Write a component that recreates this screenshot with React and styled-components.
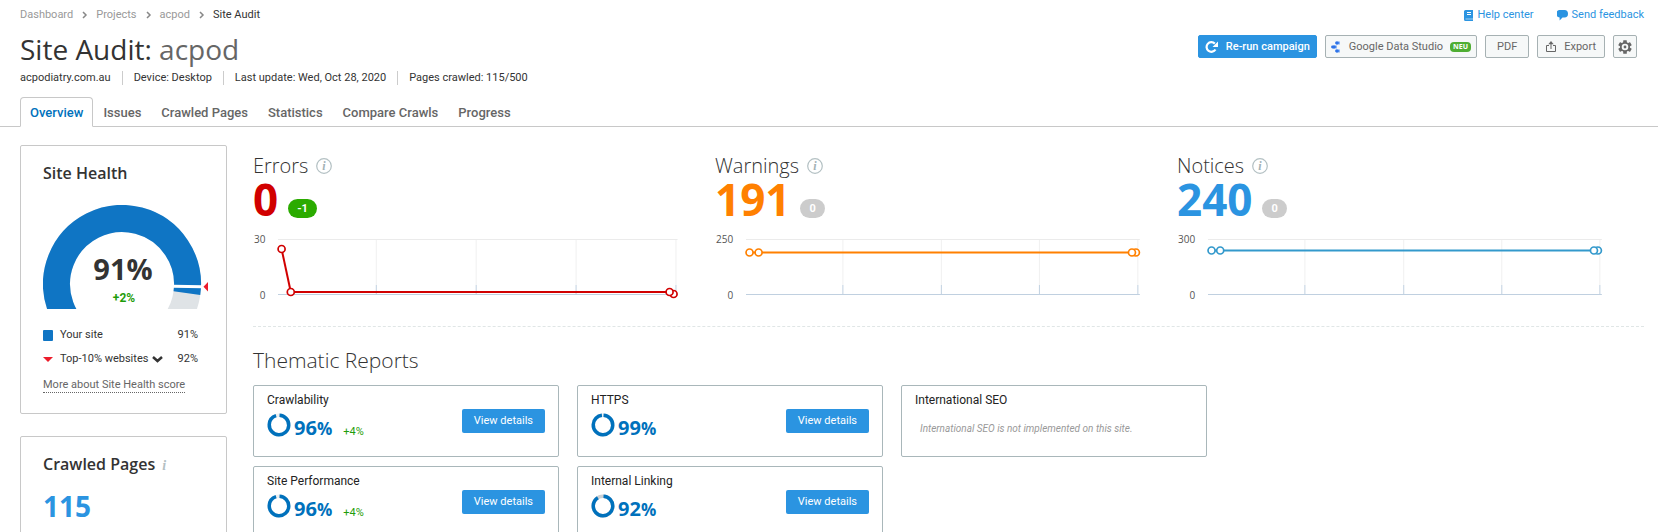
import React from 'react';
import styled, { createGlobalStyle } from 'styled-components';

const uiFont = 'Roboto, "Open Sans", sans-serif';
const displayFont = '"Open Sans", "Noto Sans", sans-serif';

const GlobalStyle = createGlobalStyle`
  *, *::before, *::after { box-sizing: border-box; }
  body {
    margin: 0;
    background: #fff;
    color: #333;
    font-family: ${uiFont};
    font-size: 11px;
    line-height: 14px;
  }
  h1, h2, h3, p, dl, dd, dt, ol, ul { margin: 0; padding: 0; }
  ol, ul { list-style: none; }
  button { font-family: inherit; cursor: pointer; }
  svg { display: block; flex: none; }
`;

/* ---------- header ---------- */

const Header = styled.header`
  display: flex;
  justify-content: space-between;
  padding: 7px 14px 0 20px;
`;

const Breadcrumbs = styled.ol`
  display: flex;
  align-items: center;
  gap: 8px;
  line-height: 16px;
`;

const Crumb = styled.li`
  display: flex;
  align-items: center;
  gap: 9px;
  color: ${(p) => (p.$current ? '#333' : '#999')};
  a { color: inherit; text-decoration: none; }
`;

const Title = styled.h1`
  margin-top: 8px;
  font: 400 28px/36px ${displayFont};
  color: #333;
  span { color: #666; }
`;

const Meta = styled.ul`
  display: flex;
  margin-top: 4px;
  li + li {
    margin-left: 11px;
    padding-left: 11px;
    border-left: 1px solid #ccc;
  }
`;

const HeaderSide = styled.div`
  display: flex;
  flex-direction: column;
  align-items: flex-end;
`;

const HelpLinks = styled.nav`
  display: flex;
  gap: 23px;
`;

const HelpLink = styled.a`
  display: flex;
  align-items: center;
  gap: 4px;
  line-height: 16px;
  color: #2b94e1;
  text-decoration: none;
`;

const Toolbar = styled.div`
  display: flex;
  gap: 8px;
  margin: 12px 7px 0 0;
`;

const ToolButton = styled.button`
  display: flex;
  align-items: center;
  gap: ${(p) => p.$gap || 7}px;
  height: 23px;
  padding: 0 ${(p) => p.$pad || 5}px;
  border: 1px solid ${(p) => (p.$primary ? '#2b94e1' : '#a6b1b3')};
  border-radius: 2px;
  background: ${(p) => (p.$primary ? '#2b94e1' : '#f6f8f8')};
  color: ${(p) => (p.$primary ? '#fff' : '#666')};
  font-size: 11px;
  font-weight: ${(p) => (p.$primary ? 500 : 400)};
  line-height: 14px;
`;

const NewTag = styled.span`
  padding: 0 3px;
  border-radius: 4px;
  background: #4fae33;
  color: #fff;
  font: 700 7px/10px ${displayFont};
`;

const Tabs = styled.nav`
  display: flex;
  margin-top: 12px;
  padding-left: 20px;
  border-bottom: 1px solid #c8c8c8;
`;

const Tab = styled.a`
  margin-bottom: -1px;
  padding: 7px 9px 6px;
  border: 1px solid ${(p) => (p.$active ? '#c8c8c8' : 'transparent')};
  border-bottom-color: ${(p) => (p.$active ? '#fff' : 'transparent')};
  border-radius: 4px 4px 0 0;
  color: ${(p) => (p.$active ? '#0071bc' : '#666')};
  font-size: 13px;
  font-weight: 500;
  line-height: 15px;
  text-decoration: none;
`;

/* ---------- sidebar ---------- */

const Content = styled.main`
  display: grid;
  grid-template-columns: 207px minmax(0, 1fr);
  gap: 26px;
  padding: 18px 14px 0 20px;
`;

const Sidebar = styled.aside`
  display: flex;
  flex-direction: column;
  gap: 22px;
`;

const Panel = styled.section`
  padding: 16px 22px 20px;
  border: 1px solid #c8c8c8;
  border-radius: 2px;
`;

const PanelTitle = styled.h2`
  display: flex;
  align-items: baseline;
  gap: 7px;
  font: 600 16px/22px ${displayFont};
  color: #333;
`;

const InfoGlyph = styled.span`
  font: italic 700 14px/16px "Liberation Serif", serif;
  color: #b4c0c3;
`;

const GaugeSvg = styled.svg`
  margin: 21px 0 19px;
  overflow: visible;
`;

const Legend = styled.dl`
  display: grid;
  grid-template-columns: 1fr auto;
  row-gap: 10px;
  padding-right: 6px;
  dt { display: flex; align-items: center; }
`;

const LegendMark = styled.span`
  display: flex;
  width: 17px;
`;

const Swatch = styled.span`
  width: 10px;
  height: 11px;
  border-radius: 1px;
  background: #0f75c4;
`;

const Select = styled.button`
  display: flex;
  align-items: center;
  gap: 4px;
  padding: 0;
  border: 0;
  background: none;
  color: inherit;
  font-size: 11px;
  line-height: 14px;
`;

const MoreLink = styled.a`
  display: inline-block;
  margin-top: 12px;
  border-bottom: 1px dotted #666;
  color: #666;
  line-height: 14px;
  text-decoration: none;
`;

const PageCount = styled.p`
  margin-top: 14px;
  font: 700 28px/34px ${displayFont};
  color: #2b94e1;
`;

/* ---------- summary ---------- */

const Summary = styled.div`
  display: grid;
  grid-template-columns: repeat(3, minmax(0, 1fr));
  padding: 8px 5px 31px 0;
`;

const MetricTitle = styled.h2`
  display: flex;
  align-items: center;
  gap: 8px;
  font: 300 20px/26px ${displayFont};
  color: #333;
`;

const MetricRow = styled.div`
  display: flex;
  align-items: flex-end;
  gap: 10px;
`;

const MetricValue = styled.strong`
  font: 700 44px/40px ${displayFont};
  color: ${(p) => p.$color};
`;

const Delta = styled.span`
  margin-bottom: 1px;
  padding: 0 9px;
  border-radius: 10px;
  background: ${(p) => (p.$good ? '#2bab00' : '#ccc')};
  color: #fff;
  font-size: 11px;
  font-weight: 700;
  line-height: 19px;
`;

const Chart = styled.div`
  display: flex;
  gap: 13px;
  margin: 20px 37px 0 1px;
`;

const Axis = styled.div`
  display: flex;
  flex-direction: column;
  justify-content: space-between;
  margin: -7px 0;
  text-align: right;
  font: 400 10px/14px ${displayFont};
  color: #555;
`;

const Plot = styled.svg`
  flex: 1;
  min-width: 0;
  height: 56px;
  overflow: visible;
`;

/* ---------- thematic reports ---------- */

const Reports = styled.section`
  padding-top: 20px;
  border-top: 1px dashed #e0e6e6;
`;

const ReportsTitle = styled(MetricTitle)`
  font-size: 21px;
`;

const ReportGrid = styled.div`
  display: grid;
  grid-template-columns: repeat(3, minmax(0, 306px));
  gap: 9px 18px;
  margin-top: 12px;
`;

const ReportCard = styled.article`
  display: flex;
  align-items: center;
  justify-content: space-between;
  height: 72px;
  padding: 0 13px;
  border: 1px solid #a9b7ba;
  border-radius: 2px;
`;

const ReportBody = styled.div`
  align-self: flex-start;
  padding-top: 6px;
`;

const ReportTitle = styled.h3`
  font-size: 12px;
  font-weight: 400;
  line-height: 16px;
  color: #222;
`;

const Score = styled.div`
  display: flex;
  margin-top: 5px;
`;

const ScoreText = styled.p`
  display: flex;
  align-items: baseline;
  margin: 3px 0 0 3px;
  font: 700 20px/24px ${displayFont};
  color: #0071bc;
  small { font-size: 17px; }
`;

const ScoreDelta = styled.span`
  margin-left: 11px;
  color: #1f9d0b;
  font: 400 11px/14px ${uiFont};
`;

const EmptyNote = styled.p`
  margin: 14px 0 0 5px;
  color: #999;
  font-size: 10px;
  font-style: italic;
`;

const DetailsButton = styled.button`
  height: 24px;
  padding: 0 12px;
  border: 0;
  border-radius: 2px;
  background: #2b94e1;
  color: #fff;
  font-size: 11px;
  line-height: 16px;
`;

/* ---------- drawings ---------- */

const Chevron = () => (
  <svg width="6" height="8" viewBox="0 0 6 8" fill="none" stroke="#888" strokeWidth="1.5">
    <path d="M1 1l3 3-3 3" />
  </svg>
);

const BookIcon = () => (
  <svg width="9" height="11" viewBox="0 0 9 11">
    <path d="M1.500 0H9v11H1.500A1.500 1.500 0 0 1 0 9.500V1.500A1.500 1.500 0 0 1 1.500 0z" fill="#2b94e1" />
    <path d="M3 2.500h4M3 4.500h4" stroke="#fff" />
    <path d="M1.500 9h7.500" stroke="#9fd0f3" />
  </svg>
);

const SpeechIcon = () => (
  <svg width="11" height="11" viewBox="0 0 11 11" fill="#2b94e1">
    <path d="M3.500 0h4A3.500 3.800 0 0 1 7.500 7.600H5.500L2.600 10.600V7.500A3.700 3.700 0 0 1 3.500 0z" />
  </svg>
);

const ReloadIcon = () => (
  <svg width="14" height="12" viewBox="0 0 14 12" fill="none" stroke="#fff" strokeWidth="2.200">
    <path d="M10.500 8.500A4.800 4.800 0 1 1 9.800 2.600" />
    <path d="M13 .5v5.500H7.500z" fill="#fff" stroke="none" />
  </svg>
);

const StudioIcon = () => (
  <svg width="11" height="12" viewBox="0 0 11 12">
    <path d="M5 2h4M2 6h4M5 10h4" stroke="#8db7f7" strokeWidth="2.800" />
    <path d="M5.500 2h1M1.500 6h2M5.500 10h1" stroke="#2f73e8" strokeWidth="2.800" strokeLinecap="round" />
  </svg>
);

const ExportIcon = () => (
  <svg width="10" height="11" viewBox="0 0 10 11" fill="none" stroke="#666">
    <path d="M3 4.500H.5v6h9v-6H7" />
    <path d="M5 8V2" />
    <path d="M5 0L2.300 3.200h5.400z" fill="#666" stroke="none" />
  </svg>
);

const GearIcon = () => (
  <svg width="14" height="14" viewBox="-7 -7 14 14">
    <g fill="#666">
      {[0, 60, 120].map((a) => (
        <rect key={a} x="-1.800" y="-6.800" width="3.600" height="13.600" rx=".5" transform={`rotate(${a})`} />
      ))}
    </g>
    <circle r="4.200" fill="#f6f8f8" stroke="#666" strokeWidth="1.800" />
    <circle r="1.400" fill="#666" />
  </svg>
);

const InfoIcon = () => (
  <svg width="16" height="16" viewBox="0 0 16 16">
    <circle cx="8" cy="8" r="7.300" fill="none" stroke="#b3c0c3" strokeWidth="1.200" />
    <text x="8" y="12" textAnchor="middle" fill="#a3b2b6" fontFamily="Liberation Serif, serif" fontStyle="italic" fontWeight="700" fontSize="12">i</text>
  </svg>
);

const Gauge = () => (
  <GaugeSvg width="161" height="104" viewBox="0 0 161 104" role="img" aria-label="Site Health 91%">
    <clipPath id="gauge-cut"><rect width="170" height="104" /></clipPath>
    <g clipPath="url(#gauge-cut)" fill="none" strokeWidth="27">
      <circle cx="79" cy="79" r="65.500" stroke="#dfe3e6" />
      <path d="M48 136.700A65.500 65.500 0 1 1 143.900 88.100" stroke="#0f75c4" />
      <path d="M130 81.200L160 81.800" stroke="#fff" strokeWidth="3" />
    </g>
    <path d="M165 77v9.500L160.500 81.700z" fill="#ec1c2b" />
    <text x="80" y="75" textAnchor="middle" fill="#333" fontFamily={displayFont} fontWeight="700" fontSize="29">91%</text>
    <text x="81" y="97" textAnchor="middle" fill="#1f9d0b" fontFamily={uiFont} fontWeight="700" fontSize="12">+2%</text>
  </GaugeSvg>
);

const Donut = ({ value }) => {
  const length = 2 * Math.PI * 9.75;
  return (
    <svg width="24" height="24" viewBox="0 0 24 24" fill="none" strokeWidth="3.500">
      <circle cx="12" cy="12" r="9.750" stroke={value > 0.95 ? '#eef0f1' : '#ccd0d3'} />
      <circle cx="12" cy="12" r="9.750" stroke="#0071bc" strokeDasharray={`${length * value - 1.4} ${length}`} transform="rotate(-87 12 12)" />
    </svg>
  );
};

/* ---------- composed parts ---------- */

const Metric = ({ title, value, color, delta, good, max, line, ticks, points }) => (
  <section>
    <MetricTitle>{title}<InfoIcon /></MetricTitle>
    <MetricRow>
      <MetricValue $color={color}>{value}</MetricValue>
      <Delta $good={good}>{delta}</Delta>
    </MetricRow>
    <Chart>
      <Axis><span>{max}</span><span>0</span></Axis>
      <Plot role="img" aria-label={`${title} over time`}>
        <line x1="0" x2="100%" y1=".5" y2=".5" stroke="#ebebeb" />
        {ticks.map((x) => (
          <g key={x}>
            <line x1={`${x}%`} x2={`${x}%`} y1="1" y2="46" stroke="#f0f0f0" />
            <line x1={`${x}%`} x2={`${x}%`} y1="46" y2="55" stroke="#c0d0e0" />
          </g>
        ))}
        <line x1="0" x2="100%" y1="55.500" y2="55.500" stroke="#c0d0e0" />
        {points.slice(1).map(([x, y], i) => (
          <line key={x} x1={`${points[i][0]}%`} y1={points[i][1]} x2={`${x}%`} y2={y} stroke={line} strokeWidth="2" />
        ))}
        {[...points].reverse().map(([x, y]) => (
          <circle key={x} cx={`${x}%`} cy={y} r="3.500" fill="#fff" stroke={line} strokeWidth="1.700" />
        ))}
      </Plot>
    </Chart>
  </section>
);

const metrics = [
  { title: 'Errors', value: 0, color: '#d10000', line: '#d10000', delta: '-1', good: true, max: 30, ticks: [24.6, 49.6, 74.6, 99.6], points: [[0.9, 10], [3.2, 53], [98, 53], [99, 55]] },
  { title: 'Warnings', value: 191, color: '#ff8000', line: '#ff8000', delta: '0', max: 250, ticks: [24.6, 49.6, 74.5, 99.5], points: [[0.9, 13.5], [3.2, 13.5], [98, 13.5], [99, 13.5]] },
  { title: 'Notices', value: 240, color: '#2b94e1', line: '#3399cc', delta: '0', max: 300, ticks: [24.6, 49.7, 74.6, 99.5], points: [[0.9, 11.5], [3.1, 11.5], [98, 11.5], [99, 11.5]] },
];

const reports = [
  { title: 'Crawlability', score: 96, delta: '+4%' },
  { title: 'HTTPS', score: 99 },
  { title: 'International SEO' },
  { title: 'Site Performance', score: 96, delta: '+4%' },
  { title: 'Internal Linking', score: 92 },
];

const tabs = ['Overview', 'Issues', 'Crawled Pages', 'Statistics', 'Compare Crawls', 'Progress'];

export default function App() {
  return (
    <>
      <GlobalStyle />
      <Header>
        <div>
          <Breadcrumbs>
            {['Dashboard', 'Projects', 'acpod'].map((name) => (
              <Crumb key={name}><a href="#up">{name}</a><Chevron /></Crumb>
            ))}
            <Crumb $current aria-current="page">Site Audit</Crumb>
          </Breadcrumbs>
          <Title>Site Audit: <span>acpod</span></Title>
          <Meta>
            <li>acpodiatry.com.au</li>
            <li>Device: Desktop</li>
            <li>Last update: Wed, Oct 28, 2020</li>
            <li>Pages crawled: 115/500</li>
          </Meta>
        </div>
        <HeaderSide>
          <HelpLinks>
            <HelpLink href="#help"><BookIcon />Help center</HelpLink>
            <HelpLink href="#feedback"><SpeechIcon />Send feedback</HelpLink>
          </HelpLinks>
          <Toolbar>
            <ToolButton $primary $pad={6}><ReloadIcon />Re-run campaign</ToolButton>
            <ToolButton><StudioIcon />Google Data Studio<NewTag>NEU</NewTag></ToolButton>
            <ToolButton $pad={11}>PDF</ToolButton>
            <ToolButton $gap={8} $pad={8}><ExportIcon />Export</ToolButton>
            <ToolButton $pad={4} aria-label="Settings"><GearIcon /></ToolButton>
          </Toolbar>
        </HeaderSide>
      </Header>
      <Tabs>
        {tabs.map((name, i) => <Tab key={name} href="#tab" $active={i === 0}>{name}</Tab>)}
      </Tabs>
      <Content>
        <Sidebar>
          <Panel>
            <PanelTitle>Site Health</PanelTitle>
            <Gauge />
            <Legend>
              <dt><LegendMark><Swatch /></LegendMark>Your site</dt>
              <dd>91%</dd>
              <dt>
                <LegendMark><svg width="10" height="5" viewBox="0 0 10 5"><path d="M0 0h10L5 5z" fill="#ec1c2b" /></svg></LegendMark>
                <Select>
                  Top-10% websites
                  <svg width="11" height="7" viewBox="0 0 11 7" fill="none" stroke="#333" strokeWidth="2.500"><path d="M1 1l4.500 4L10 1" /></svg>
                </Select>
              </dt>
              <dd>92%</dd>
            </Legend>
            <MoreLink href="#health">More about Site Health score</MoreLink>
          </Panel>
          <Panel>
            <PanelTitle>Crawled Pages<InfoGlyph>i</InfoGlyph></PanelTitle>
            <PageCount>115</PageCount>
          </Panel>
        </Sidebar>
        <div>
          <Summary>
            {metrics.map((m) => <Metric key={m.title} {...m} />)}
          </Summary>
          <Reports>
            <ReportsTitle>Thematic Reports</ReportsTitle>
            <ReportGrid>
              {reports.map((r) => (
                <ReportCard key={r.title}>
                  <ReportBody>
                    <ReportTitle>{r.title}</ReportTitle>
                    {r.score ? (
                      <Score>
                        <Donut value={r.score / 100} />
                        <ScoreText>{r.score}<small>%</small>{r.delta && <ScoreDelta>{r.delta}</ScoreDelta>}</ScoreText>
                      </Score>
                    ) : (
                      <EmptyNote>International SEO is not implemented on this site.</EmptyNote>
                    )}
                  </ReportBody>
                  {r.score && <DetailsButton>View details</DetailsButton>}
                </ReportCard>
              ))}
            </ReportGrid>
          </Reports>
        </div>
      </Content>
    </>
  );
}
